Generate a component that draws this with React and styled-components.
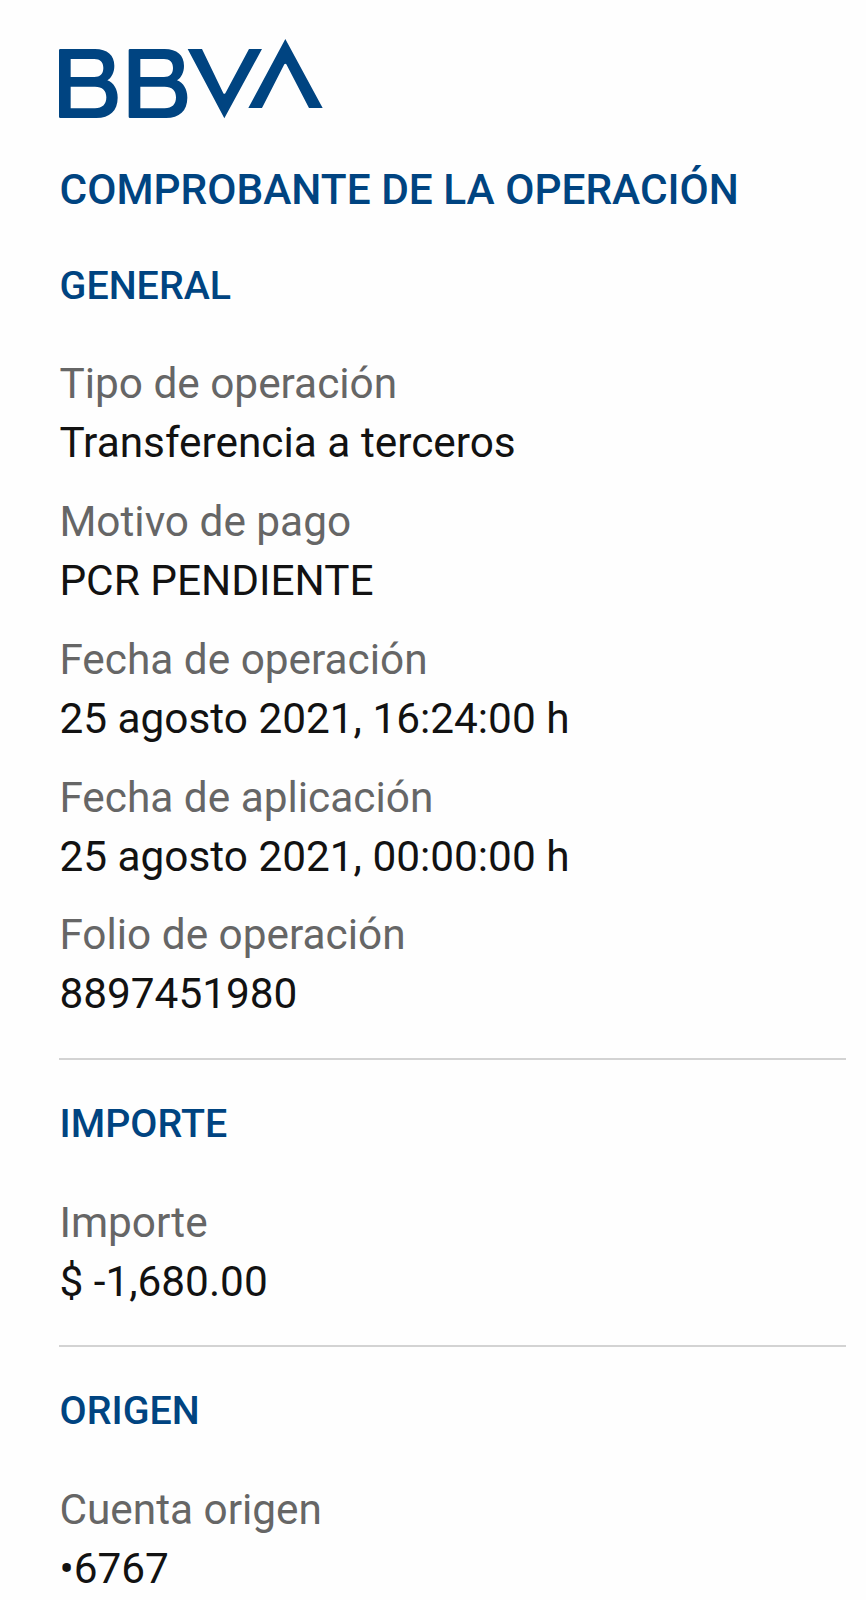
import React from "react";
import { styled, createGlobalStyle } from "styled-components";

const GlobalStyle = createGlobalStyle`
  body {
    margin: 0;
    background: #fefefe;
    font-family: Roboto, "Liberation Sans", sans-serif;
  }
`;

const Receipt = styled.main`
  box-sizing: border-box;
  height: 1600px;
  padding: 38px 20px 0 59px;
  overflow: hidden;
`;

const Logo = styled.svg`
  display: block;
  width: 264px;
  height: 81px;
  fill: #004481;
`;

const Title = styled.h1`
  margin: 45.8px 0 48.9px;
  padding-left: 0.6px;
  color: #004481;
  font-size: 42.4px;
  font-weight: 500;
  line-height: 50px;
  white-space: nowrap;
`;

const Section = styled.section`
  & + & {
    margin-top: 34.8px;
    padding-top: 41.8px;
    border-top: 2px solid #d3d3d3;
  }
`;

const SectionTitle = styled.h2`
  margin: 0 0 46.6px;
  padding-left: 0.6px;
  color: #004481;
  font-size: 39.4px;
  font-weight: 500;
  line-height: 44px;
`;

const DetailList = styled.dl`
  display: flex;
  flex-direction: column;
  gap: 19.8px;
  margin: 0;
`;

const Detail = styled.div`
  padding-left: 0.4px;
  font-size: 42.35px;
  line-height: 59px;
  white-space: nowrap;
`;

const Label = styled.dt`
  color: #666;
`;

const Value = styled.dd`
  margin: 0;
  color: #121212;
`;

const sections = [
  {
    title: "GENERAL",
    details: [
      ["Tipo de operación", "Transferencia a terceros"],
      ["Motivo de pago", "PCR PENDIENTE"],
      ["Fecha de operación", "25 agosto 2021, 16:24:00 h"],
      ["Fecha de aplicación", "25 agosto 2021, 00:00:00 h"],
      ["Folio de operación", "8897451980"],
    ],
  },
  {
    title: "IMPORTE",
    details: [["Importe", "$ -1,680.00"]],
  },
  {
    title: "ORIGEN",
    details: [["Cuenta origen", "•6767"]],
  },
];

const letterB =
  "M4 57H108C145 57 166 76 166 107C166 127 158 143 145 151C164 158 176 178 176 203C176 242 152 264 112 264H4Q0 264 0 260V61Q0 57 4 57ZM35 87V141H106C123 141 133 132 133 114C133 96 123 87 106 87ZM35 170V235H108C130 235 142 223 142 202C142 181 130 170 108 170Z";

export default function App() {
  return (
    <>
      <GlobalStyle />
      <Receipt>
        <Logo viewBox="27 24 792 243" role="img" aria-label="BBVA">
          <path fillRule="evenodd" transform="translate(27 0)" d={letterB} />
          <path fillRule="evenodd" transform="translate(236 0)" d={letterB} />
          <path d="M413 57H456L520 190Q523 193 526 190L597 57H636L523 265Z" />
          <path d="M706 27L818 234H777L709 103Q706 100 703 103L636 234H595Z" />
        </Logo>
        <Title>COMPROBANTE DE LA OPERACIÓN</Title>
        {sections.map((section) => (
          <Section key={section.title}>
            <SectionTitle>{section.title}</SectionTitle>
            <DetailList>
              {section.details.map(([label, value]) => (
                <Detail key={label}>
                  <Label>{label}</Label>
                  <Value>{value}</Value>
                </Detail>
              ))}
            </DetailList>
          </Section>
        ))}
      </Receipt>
    </>
  );
}
